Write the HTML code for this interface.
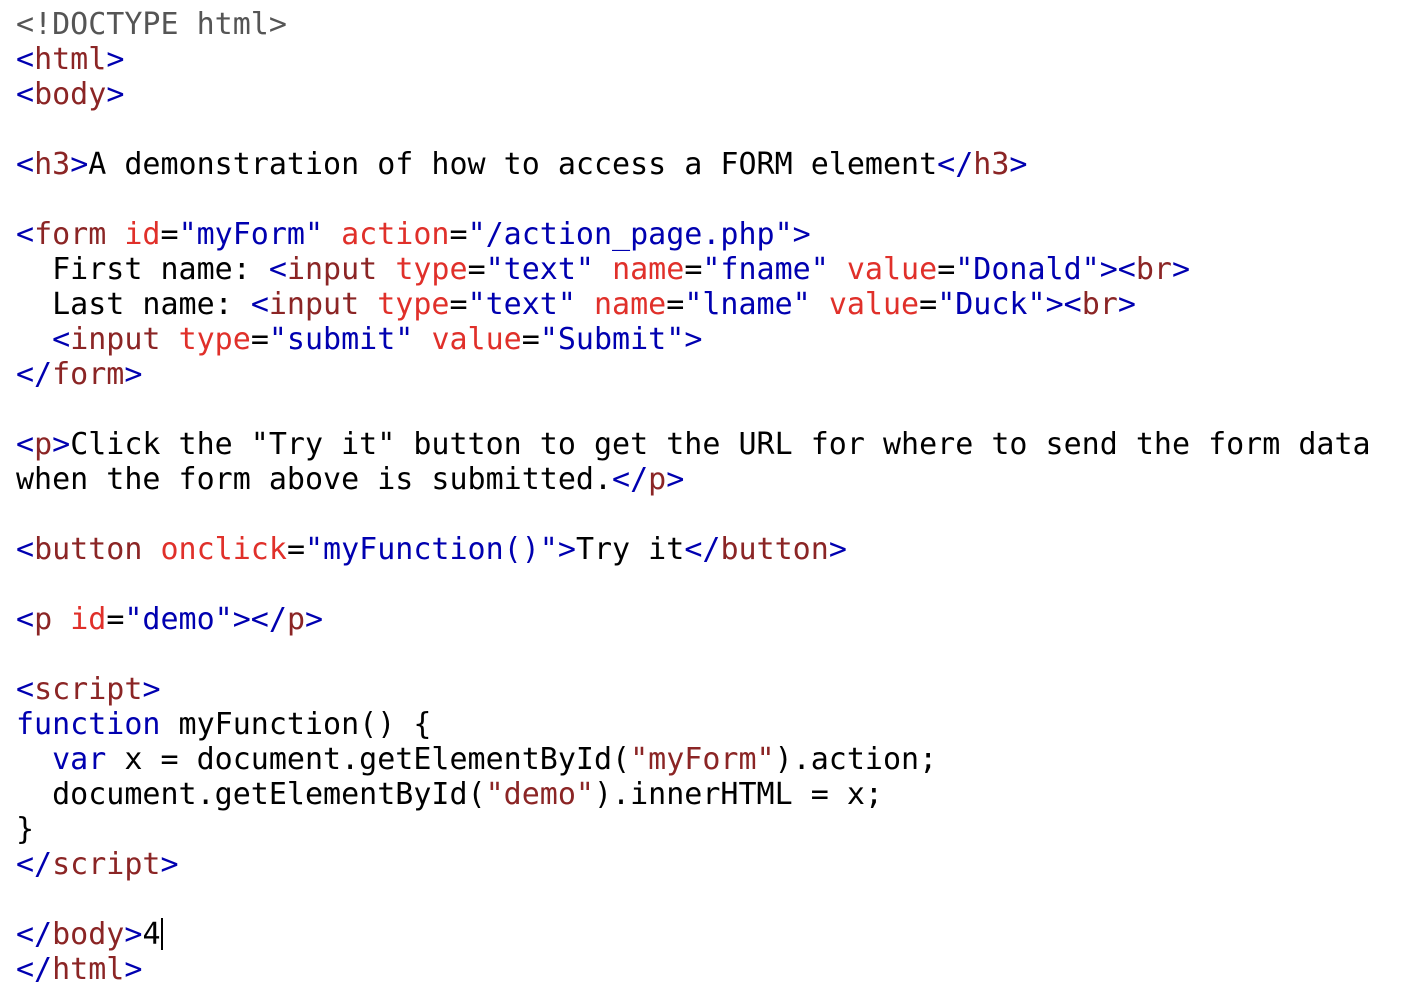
<!DOCTYPE html>
<html><head><style>
body{margin:0;background:#fff;width:1404px;height:996px;overflow:hidden}
pre{margin:0;position:absolute;left:16px;top:7px;font-family:"DejaVu Sans Mono","Liberation Mono",monospace;font-size:30px;line-height:35px;color:#000}
.g{color:#555}.b{color:#0000b0}.t{color:#8b2525}.a{color:#e0302a}.v{color:#0000b0}.s{color:#8b2525}
.cur{display:inline-block;width:2px;height:32px;background:#000;vertical-align:-6px}
</style></head><body><pre><span class="g">&lt;!DOCTYPE html&gt;</span>
<span class="b">&lt;</span><span class="t">html</span><span class="b">&gt;</span>
<span class="b">&lt;</span><span class="t">body</span><span class="b">&gt;</span>

<span class="b">&lt;</span><span class="t">h3</span><span class="b">&gt;</span>A demonstration of how to access a FORM element<span class="b">&lt;/</span><span class="t">h3</span><span class="b">&gt;</span>

<span class="b">&lt;</span><span class="t">form</span> <span class="a">id</span>=<span class="v">"myForm"</span> <span class="a">action</span>=<span class="v">"/action_page.php"</span><span class="b">&gt;</span>
  First name: <span class="b">&lt;</span><span class="t">input</span> <span class="a">type</span>=<span class="v">"text"</span> <span class="a">name</span>=<span class="v">"fname"</span> <span class="a">value</span>=<span class="v">"Donald"</span><span class="b">&gt;&lt;</span><span class="t">br</span><span class="b">&gt;</span>
  Last name: <span class="b">&lt;</span><span class="t">input</span> <span class="a">type</span>=<span class="v">"text"</span> <span class="a">name</span>=<span class="v">"lname"</span> <span class="a">value</span>=<span class="v">"Duck"</span><span class="b">&gt;&lt;</span><span class="t">br</span><span class="b">&gt;</span>
  <span class="b">&lt;</span><span class="t">input</span> <span class="a">type</span>=<span class="v">"submit"</span> <span class="a">value</span>=<span class="v">"Submit"</span><span class="b">&gt;</span>
<span class="b">&lt;/</span><span class="t">form</span><span class="b">&gt;</span>

<span class="b">&lt;</span><span class="t">p</span><span class="b">&gt;</span>Click the "Try it" button to get the URL for where to send the form data
when the form above is submitted.<span class="b">&lt;/</span><span class="t">p</span><span class="b">&gt;</span>

<span class="b">&lt;</span><span class="t">button</span> <span class="a">onclick</span>=<span class="v">"myFunction()"</span><span class="b">&gt;</span>Try it<span class="b">&lt;/</span><span class="t">button</span><span class="b">&gt;</span>

<span class="b">&lt;</span><span class="t">p</span> <span class="a">id</span>=<span class="v">"demo"</span><span class="b">&gt;&lt;/</span><span class="t">p</span><span class="b">&gt;</span>

<span class="b">&lt;</span><span class="t">script</span><span class="b">&gt;</span>
<span class="b">function</span> myFunction() {
  <span class="b">var</span> x = document.getElementById(<span class="s">"myForm"</span>).action;
  document.getElementById(<span class="s">"demo"</span>).innerHTML = x;
}
<span class="b">&lt;/</span><span class="t">script</span><span class="b">&gt;</span>

<span class="b">&lt;/</span><span class="t">body</span><span class="b">&gt;</span>4<span class="cur"></span>
<span class="b">&lt;/</span><span class="t">html</span><span class="b">&gt;</span></pre></body></html>
